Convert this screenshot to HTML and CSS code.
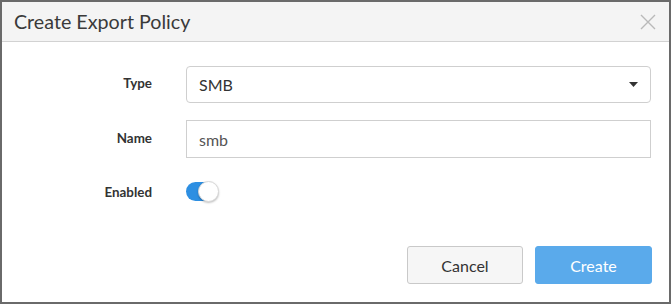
FILE: index.html
```html
<!DOCTYPE html>
<html>
<head>
<meta charset="utf-8">
<link rel="stylesheet" href="styles.css">
</head>
<body>
<div class="dialog">
  <div class="header">
    <span class="title">Create Export Policy</span>
    <svg class="close" width="16" height="16" viewBox="0 0 16 16"><path d="M1 1L15 15M15 1L1 15" stroke="#b9b9b9" stroke-width="1.4" fill="none"/></svg>
  </div>
  <div class="body">
    <div class="row row-type">
      <label class="label">Type</label>
      <div class="select">
        <span>SMB</span>
        <svg class="caret" width="9" height="5" viewBox="0 0 9 5"><path d="M0 0H9L4.5 5Z" fill="#333"/></svg>
      </div>
    </div>
    <div class="row row-name">
      <label class="label">Name</label>
      <div class="input">smb</div>
    </div>
    <div class="row row-enabled">
      <label class="label">Enabled</label>
      <div class="toggle"><span class="knob"></span></div>
    </div>
  </div>
  <div class="footer">
    <button class="btn cancel">Cancel</button>
    <button class="btn create">Create</button>
  </div>
</div>
</body>
</html>
```

FILE: styles.css
```css
html, body {
  margin: 0;
  padding: 0;
  background: #fff;
}
.dialog {
  box-sizing: border-box;
  width: 671px;
  height: 304px;
  border: 2px solid #6a6a6a;
  display: flex;
  flex-direction: column;
  font-family: Lato, "Open Sans", sans-serif;
  color: #333;
}
.header {
  height: 39px;
  background: #f4f4f4;
  border-bottom: 1px solid #d2d2d2;
  display: flex;
  align-items: center;
  justify-content: space-between;
  padding: 0 13px 0 12px;
}
.title {
  font-size: 19.7px;
  color: #3a3a3a;
}
.close {
  display: block;
}
.body {
  padding-top: 24px;
  flex: 1;
}
.row {
  display: grid;
  grid-template-columns: 150px 465px;
  column-gap: 34px;
  align-items: center;
}
.label {
  text-align: right;
  font-weight: bold;
  font-size: 13.4px;
  color: #333;
  padding-bottom: 3px;
}
.row-enabled .label {
  padding-bottom: 0;
}
.select, .input {
  box-sizing: border-box;
  border: 1px solid #cfcfcf;
  display: flex;
  align-items: center;
  padding: 0 12px;
  font-size: 16px;
}
.select {
  height: 37px;
  border-radius: 4px;
  justify-content: space-between;
  color: #333;
}
.row-name {
  margin-top: 17px;
}
.input {
  height: 38px;
  color: #555;
}
.row-enabled {
  margin-top: 24px;
}
.toggle {
  position: relative;
  width: 31px;
  height: 19px;
  border-radius: 10px;
  background: #2d8fe2;
}
.knob {
  position: absolute;
  right: -2px;
  top: -1px;
  width: 19px;
  height: 19px;
  border-radius: 50%;
  background: #fff;
  border: 1px solid #d8d8d8;
  box-shadow: 0 1px 2px rgba(0,0,0,0.25);
}
.footer {
  display: flex;
  justify-content: flex-end;
  gap: 12px;
  padding: 0 17px 18px 0;
}
.btn {
  box-sizing: border-box;
  height: 38px;
  font-family: Lato, "Open Sans", sans-serif;
  font-size: 16px;
  border-radius: 3px;
  cursor: pointer;
}
.cancel {
  width: 116px;
  background: #f6f6f6;
  border: 1px solid #c9c9c9;
  color: #333;
}
.create {
  width: 117px;
  background: #5aaaeb;
  border: 1px solid #5aaaeb;
  color: #fff;
}
```
